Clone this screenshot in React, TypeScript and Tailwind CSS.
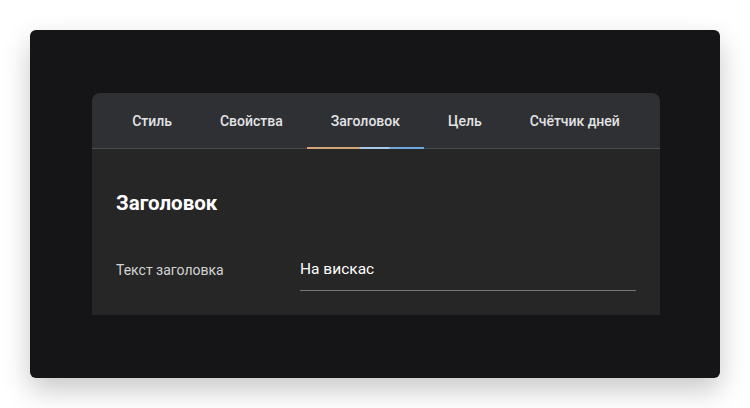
const tabs = ["Стиль", "Свойства", "Заголовок", "Цель", "Счётчик дней"];

export default function App() {
  return (
    <div className="h-[408px] w-[750px] bg-white p-[30px] font-['Roboto',sans-serif]">
      <div className="h-[348px] w-[690px] rounded-[6px] bg-[#151517] pt-[63px] pl-[62px] shadow-[0_12px_28px_rgba(0,0,0,0.22)]">
        <div className="w-[568px] overflow-hidden rounded-t-[8px]">
          <div className="flex h-[56px] justify-center border-b border-[#4b4c50] bg-[#2f3034]">
            {tabs.map((tab) => {
              const active = tab === "Заголовок";
              return (
                <div
                  key={tab}
                  className="relative flex items-center px-6 pt-[1px] text-[14px] font-medium text-[#e3e3e6]"
                >
                  {tab}
                  {active && (
                    <span className="absolute right-0 -bottom-px left-0 h-[2px] bg-[linear-gradient(90deg,#d3a67a_0%,#d3a67a_45%,#a8c8e8_46%,#a8c8e8_70%,#6fa8dc_71%,#6fa8dc_100%)]" />
                  )}
                </div>
              );
            })}
          </div>
          <div className="h-[166px] bg-[#262626] px-6 pt-[42px]">
            <h2 className="text-[20.5px] leading-[24px] font-bold text-white">Заголовок</h2>
            <div className="mt-[40px] flex items-start">
              <div className="w-[184px] pt-[5px] text-[14px] text-[#d4d4d4]">Текст заголовка</div>
              <div className="flex-1 border-b border-[#777] pt-[3px] pb-[9px] text-[15.5px] text-white">
                На вискас
              </div>
            </div>
          </div>
        </div>
      </div>
    </div>
  );
}
